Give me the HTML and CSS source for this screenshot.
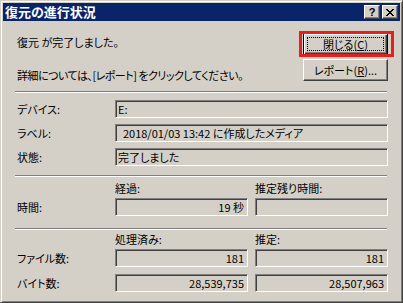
FILE: index.html
```html
<!DOCTYPE html>
<html lang="ja">
<head>
<meta charset="utf-8">
<title>復元の進行状況</title>
<link rel="stylesheet" href="styles.css">
</head>
<body>
<div class="window">
  <div class="titlebar">
    <span class="title">復元の進行状況</span>
    <div class="caption-btns">
      <span class="cbtn help">?</span>
      <span class="cbtn close"><svg width="8" height="7" viewBox="0 0 8 7" shape-rendering="crispEdges"><path fill="#000" d="M0 0h2v1H0z M6 0h2v1H6z M1 1h2v1H1z M5 1h2v1H5z M2 2h4v1H2z M3 3h2v1H3z M2 4h4v1H2z M1 5h2v1H1z M5 5h2v1H5z M0 6h2v1H0z M6 6h2v1H6z"/></svg></span>
    </div>
  </div>
  <div class="content">
    <div class="top">
      <p class="msg">復元 が完了しました。</p>
      <div class="btn default">閉じる(<u>C</u>)<span class="redmark"></span></div>
      <p class="detail">詳細については、[レポート] をクリックしてください。</p>
      <div class="btn">レポート(<u>R</u>)...</div>
    </div>
    <hr class="sep sep1">
    <div class="rows">
      <span class="label">デバイス:</span><div class="field">E:</div>
      <span class="label">ラベル:</span><div class="field">  2018/01/03 13:42 に作成したメディア</div>
      <span class="label">状態:</span><div class="field">完了しました</div>
    </div>
    <hr class="sep sep2">
    <div class="stats stats1">
      <span></span><span class="head">経過:</span><span class="head">推定残り時間:</span>
      <span class="label">時間:</span><div class="field num">19 秒</div><div class="field num"></div>
    </div>
    <hr class="sep sep3">
    <div class="stats stats2">
      <span></span><span class="head">処理済み:</span><span class="head">推定:</span>
      <span class="label">ファイル数:</span><div class="field num">181</div><div class="field num">181</div>
      <span class="label r3">バイト数:</span><div class="field num r3">28,539,735</div><div class="field num r3">28,507,963</div>
    </div>
  </div>
</div>
</body>
</html>
```
FILE: styles.css
```css
* { box-sizing: border-box; }
html, body { margin: 0; padding: 0; }
body {
  width: 403px;
  height: 303px;
  overflow: hidden;
  background: #d4d0c8;
  color: #000;
  font-family: "Noto Sans CJK JP", sans-serif;
  font-size: 11px;
  font-feature-settings: "palt";
}
.window {
  width: 403px;
  height: 303px;
  background: #d4d0c8;
  border: 1px solid;
  border-color: #d4d0c8 #404040 #404040 #d4d0c8;
  padding: 2px;
  box-shadow: inset 1px 1px #fff, inset -1px -1px #808080;
}
.titlebar {
  height: 18px;
  background: #0a246a;
  display: flex;
  align-items: center;
  padding: 0 2px;
  color: #fff;
}
.title {
  flex: 1;
  font-weight: bold;
  font-size: 13px;
  line-height: 18px;
  white-space: nowrap;
}
.caption-btns { display: flex; gap: 2px; }
.cbtn {
  width: 16px;
  height: 14px;
  background: #d4d0c8;
  border: 1px solid;
  border-color: #fff #404040 #404040 #fff;
  box-shadow: inset -1px -1px #808080;
  display: flex;
  align-items: center;
  justify-content: center;
  color: #000;
}
.help {
  font: bold 11px/12px "Liberation Sans", sans-serif;
}
.content { padding: 12px 12px 0 12px; }
.top {
  display: grid;
  grid-template-columns: 1fr 85px;
  grid-template-rows: 22px 22px;
  row-gap: 4px;
}
.msg, .detail {
  margin: 0;
  line-height: 16px;
  padding-left: 2px;
  white-space: nowrap;
}
.msg { padding-top: 1px; }
.detail { margin-top: 8px; letter-spacing: -0.5px; }
.btn {
  position: relative;
  height: 22px;
  border: 1px solid;
  border-color: #fff #404040 #404040 #fff;
  box-shadow: inset -1px -1px #808080;
  display: flex;
  align-items: center;
  justify-content: center;
  line-height: 16px;
  white-space: nowrap;
}
.btn u { text-underline-offset: 1px; }
.btn.default {
  border-color: #000;
  box-shadow: inset 1px 1px #fff, inset -1px -1px #404040, inset -2px -2px #808080;
  outline: 1px dotted #000;
  outline-offset: -5px;
}
.redmark {
  position: absolute;
  top: -3px;
  left: -5px;
  right: -7px;
  bottom: -3px;
  border: 3px solid #e3211f;
}
.sep {
  height: 2px;
  margin: 0 1px 0 0;
  border: 0;
  border-top: 1px solid #808080;
  border-bottom: 1px solid #fff;
}
.sep1 { margin-top: 10px; }
.sep2 { margin-top: 9px; }
.sep3 { margin-top: 12px; }
.rows {
  display: grid;
  grid-template-columns: 100px 1fr;
  grid-auto-rows: 18px;
  row-gap: 6px;
  padding-top: 7px;
}
.label {
  line-height: 18px;
  padding-left: 2px;
  white-space: nowrap;
}
.field {
  height: 18px;
  border: 1px solid;
  border-color: #808080 #fff #fff #808080;
  box-shadow: inset 1px 1px #404040, inset -1px -1px #d4d0c8;
  line-height: 16px;
  padding: 0 3px 0 2px;
  white-space: pre;
  overflow: hidden;
}
.field.num { text-align: right; }
.stats {
  display: grid;
  grid-template-columns: 93px 133px 133px;
  column-gap: 7px;
}
.stats .head {
  line-height: 16px;
  margin-bottom: 2px;
  white-space: nowrap;
}
.stats1 { padding-top: 3px; }
.stats2 { padding-top: 1px; }
.r3 { margin-top: 7px; }
```
